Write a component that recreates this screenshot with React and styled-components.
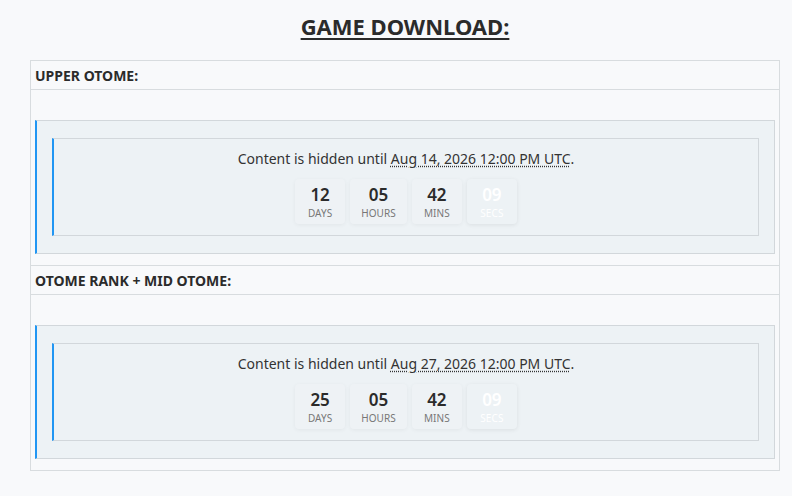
import React from "react";
import styled, { createGlobalStyle } from "styled-components";

const Global = createGlobalStyle`
  html, body { margin: 0; padding: 0; background: #f8f9fb; }
  body { font-family: "Noto Sans", "Open Sans", sans-serif; color: #333; }
`;

const Page = styled.div`
  margin: 0 12px 0 30px;
  padding-top: 8px;
`;

const Title = styled.h2`
  margin: 0 0 16px;
  text-align: center;
  font-size: 22px;
  line-height: 36px;
  font-weight: 700;
  text-decoration: underline;
  text-underline-offset: 3px;
  text-decoration-thickness: 2px;
  color: #2b2b2b;
`;

const Table = styled.table`
  width: 100%;
  border-collapse: collapse;
  border: 1px solid #d8dcdf;
`;

const HeadCell = styled.td`
  border-bottom: 1px solid #d8dcdf;
  border-top: 1px solid #d8dcdf;
  padding: 5px 4px 4px;
  font-size: 14px;
  font-weight: 700;
  line-height: 19px;
  color: #2b2b2b;
  text-align: left;
`;

const BodyCell = styled.td`
  padding: 30px 4px 11px;
`;

const Outer = styled.div`
  background: #edf2f5;
  border: 1px solid #d2d7db;
  border-left: 2px solid #2196f3;
  padding: 17px 15px 17px 15px;
`;

const Inner = styled.div`
  border: 1px solid #d2d7db;
  border-left: 2px solid #2196f3;
  padding: 10px 10px 11px;
  text-align: center;
`;

const Message = styled.p`
  margin: 0 0 10px;
  font-size: 14px;
  line-height: 20px;
  color: #333;
`;

const Abbr = styled.abbr`
  text-decoration: underline dotted;
  text-underline-offset: 2px;
  cursor: help;
`;

const Counter = styled.div`
  display: flex;
  justify-content: center;
  gap: 5px;
`;

const Unit = styled.div`
  min-width: 50px;
  box-sizing: border-box;
  height: 45px;
  padding: 5px 11px 0;
  border-radius: 4px;
  background: ${(p) => (p.$muted ? "#edf2f5" : "#eef2f5")};
  box-shadow: 0 1px 4px rgba(0, 0, 0, ${(p) => (p.$muted ? 0.08 : 0.05)});
  display: flex;
  flex-direction: column;
  align-items: center;
`;

const Num = styled.span`
  font-size: 17px;
  font-weight: 600;
  line-height: 22px;
  color: ${(p) => (p.$muted ? "#ffffff" : "#2b2b2b")};
`;

const Label = styled.span`
  font-size: 10px;
  line-height: 14px;
  letter-spacing: 0.1px;
  color: ${(p) => (p.$muted ? "#ffffff" : "#777")};
`;

const Countdown = ({ date, days }) => (
  <Outer>
    <Inner>
      <Message>
        Content is hidden until <Abbr title={date}>{date}</Abbr>.
      </Message>
      <Counter>
        {[
          [days, "DAYS"],
          ["05", "HOURS"],
          ["42", "MINS"],
          ["09", "SECS", true],
        ].map(([n, l, m]) => (
          <Unit key={l} $muted={m}>
            <Num $muted={m}>{n}</Num>
            <Label $muted={m}>{l}</Label>
          </Unit>
        ))}
      </Counter>
    </Inner>
  </Outer>
);

export default function App() {
  return (
    <>
      <Global />
      <Page>
        <Title>GAME DOWNLOAD:</Title>
        <Table>
          <tbody>
            <tr><HeadCell>UPPER OTOME:</HeadCell></tr>
            <tr>
              <BodyCell>
                <Countdown date="Aug 14, 2026 12:00 PM UTC" days="12" />
              </BodyCell>
            </tr>
            <tr><HeadCell>OTOME RANK + MID OTOME:</HeadCell></tr>
            <tr>
              <BodyCell>
                <Countdown date="Aug 27, 2026 12:00 PM UTC" days="25" />
              </BodyCell>
            </tr>
          </tbody>
        </Table>
      </Page>
    </>
  );
}
